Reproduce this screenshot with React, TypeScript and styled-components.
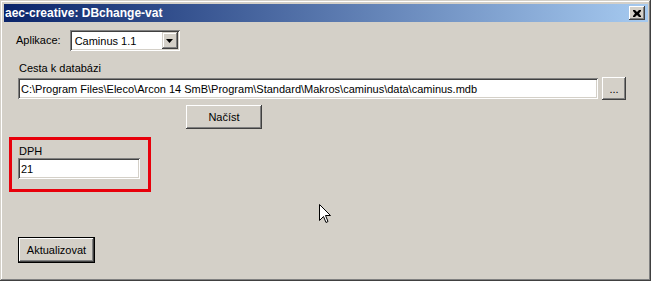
import React from "react";
import styled, { createGlobalStyle } from "styled-components";

const GlobalStyle = createGlobalStyle`
  html, body { margin: 0; padding: 0; background: #d4d0c8; }
  body { font-family: "Liberation Sans", Arial, sans-serif; font-size: 11px; color: #000; }
  * { box-sizing: border-box; }
`;

const Window = styled.div`
  position: relative;
  width: 651px;
  height: 281px;
  background: #d4d0c8;
  padding: 4px;
  box-shadow: inset -1px -1px #404040, inset 1px 1px #d4d0c8,
    inset -2px -2px #808080, inset 2px 2px #ffffff;
  display: flex;
  flex-direction: column;
`;

const TitleBar = styled.div`
  height: 18px;
  margin-right: -1px;
  background: linear-gradient(to right, #0a246a, #a6caf0);
  display: flex;
  align-items: center;
  justify-content: space-between;
  padding: 0 2px 0 0;
`;

const TitleText = styled.span`
  color: #fff;
  font-weight: bold;
  font-size: 12px;
  padding-left: 1px;
`;

const CloseBtn = styled.div`
  width: 16px;
  height: 14px;
  background: #d4d0c8;
  box-shadow: inset -1px -1px #404040, inset 1px 1px #ffffff,
    inset -2px -2px #808080;
  display: flex;
  align-items: center;
  justify-content: center;
  margin-right: 1px;
`;

const Client = styled.div`
  flex: 1;
  display: flex;
  flex-direction: column;
  padding: 8px 0 0 12px;
`;

const AppRow = styled.div`
  display: flex;
  align-items: center;
  height: 21px;
  gap: 9px;
`;

const Label = styled.span<{ $indent?: number }>`
  display: block;
  padding-left: ${(p) => p.$indent ?? 0}px;
  line-height: 13px;
`;

const Sunken = styled.div<{ $w: number }>`
  width: ${(p) => p.$w}px;
  height: 21px;
  background: #fff;
  box-shadow: inset 1px 1px #808080, inset -1px -1px #ffffff,
    inset 2px 2px #404040, inset -2px -2px #d4d0c8;
  display: flex;
  align-items: center;
  padding: 0 3px 0 3px;
  white-space: nowrap;
  overflow: hidden;
`;

const Combo = styled(Sunken)`
  justify-content: space-between;
  padding: 2px 2px 2px 5px;
`;

const DropBtn = styled.div`
  width: 16px;
  height: 17px;
  background: #d4d0c8;
  box-shadow: inset -1px -1px #404040, inset 1px 1px #d4d0c8,
    inset -2px -2px #808080, inset 2px 2px #ffffff;
  display: flex;
  align-items: center;
  justify-content: center;
`;

const PathSection = styled.div`
  display: flex;
  flex-direction: column;
  margin-top: 11px;
  padding-left: 2px;
`;

const PathRow = styled.div`
  display: flex;
  align-items: center;
  margin-top: 2px;
  gap: 4px;
`;

const Button = styled.div<{ $w: number; $h: number; $default?: boolean }>`
  width: ${(p) => p.$w}px;
  height: ${(p) => p.$h}px;
  background: #d4d0c8;
  display: flex;
  align-items: center;
  justify-content: center;
  box-shadow: ${(p) =>
    p.$default
      ? "inset 0 0 0 1px #000, inset -2px -2px #404040, inset 2px 2px #ffffff, inset -3px -3px #808080"
      : "inset -1px -1px #404040, inset 1px 1px #ffffff, inset -2px -2px #808080"};
`;

const LoadRow = styled.div`
  display: flex;
  padding-left: 170px;
  margin-top: 5px;
`;

const VatBox = styled.div`
  width: 142px;
  height: 55px;
  margin-top: 8px;
  margin-left: -7px;
  border: 3px solid #e8000b;
  padding: 5px 0 0 6px;
  display: flex;
  flex-direction: column;
`;

const VatLabel = styled.span`
  padding-left: 1px;
  line-height: 13px;
`;

const VatInput = styled(Sunken)`
  margin-top: 0;
`;

const BottomRow = styled.div`
  display: flex;
  padding-left: 2px;
  margin-top: 45px;
`;

const Cursor = styled.svg`
  position: absolute;
  left: 319px;
  top: 204px;
`;

export default function App() {
  return (
    <>
      <GlobalStyle />
      <Window>
        <TitleBar>
          <TitleText>aec-creative: DBchange-vat</TitleText>
          <CloseBtn>
            <svg width="8" height="7" viewBox="0 0 8 7">
              <path d="M0 0h2l2 2 2-2h2v1L6 3.5 8 6v1H6L4 5 2 7H0V6l2-2.5L0 1z" fill="#000" />
            </svg>
          </CloseBtn>
        </TitleBar>
        <Client>
          <AppRow>
            <Label>Aplikace:</Label>
            <Combo $w={110}>
              <span>Caminus 1.1</span>
              <DropBtn>
                <svg width="7" height="4" viewBox="0 0 7 4">
                  <path d="M0 0h7L3.5 4z" fill="#000" />
                </svg>
              </DropBtn>
            </Combo>
          </AppRow>
          <PathSection>
            <Label $indent={1}>Cesta k databázi</Label>
            <PathRow>
              <Sunken $w={580}>
                C:\Program Files\Eleco\Arcon 14 SmB\Program\Standard\Makros\caminus\data\caminus.mdb
              </Sunken>
              <Button $w={24} $h={23}>...</Button>
            </PathRow>
          </PathSection>
          <LoadRow>
            <Button $w={76} $h={24}>Načíst</Button>
          </LoadRow>
          <VatBox>
            <VatLabel>DPH</VatLabel>
            <VatInput $w={122}>21</VatInput>
          </VatBox>
          <BottomRow>
            <Button $w={77} $h={26} $default>Aktualizovat</Button>
          </BottomRow>
        </Client>
        <Cursor width="12" height="20" viewBox="0 0 12 20">
          <path
            d="M0.5 0.5 V16.5 L4.5 12.5 L7 18.5 L9 17.5 L6.5 11.5 H11.5 Z"
            fill="#fff"
            stroke="#000"
            strokeWidth="1"
          />
        </Cursor>
      </Window>
    </>
  );
}
